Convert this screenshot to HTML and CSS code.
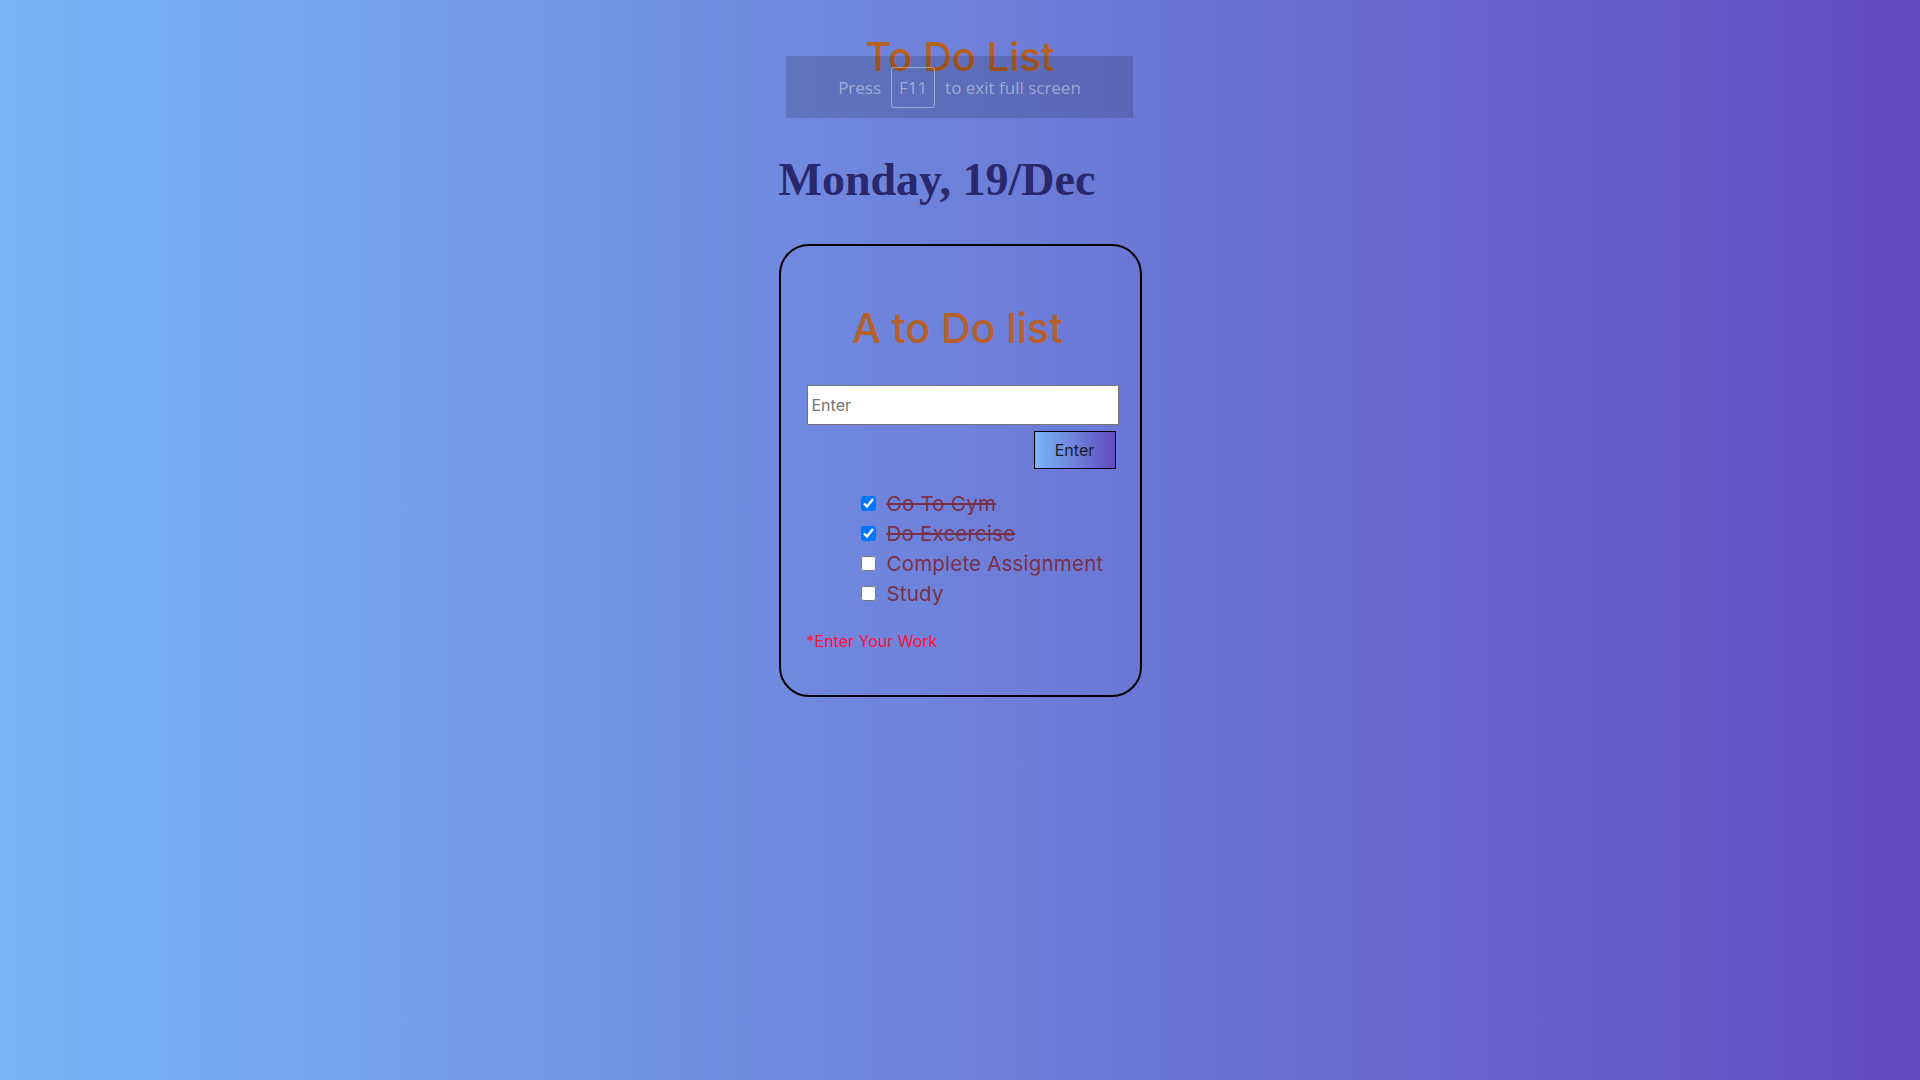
FILE: index.html
```html
<!DOCTYPE html>
<html lang="en">
<head>
<meta charset="utf-8">
<title>To Do List</title>
<link rel="stylesheet" href="styles.css">
</head>
<body>
  <h1 class="app-title">To Do List</h1>
  <main class="container">
    <h2 class="date">Monday, 19/Dec</h2>
    <section class="card">
      <h2 class="card-title">A to Do list</h2>
      <div class="form">
        <input class="task-input" type="text" placeholder="Enter">
        <button class="enter-btn" type="button">Enter</button>
      </div>
      <ul class="tasks">
        <li class="task done"><input type="checkbox" class="check" checked><span>Go To Gym</span></li>
        <li class="task done"><input type="checkbox" class="check" checked><span>Do Excercise</span></li>
        <li class="task"><input type="checkbox" class="check"><span>Complete Assignment</span></li>
        <li class="task"><input type="checkbox" class="check"><span>Study</span></li>
      </ul>
      <p class="hint">*Enter Your Work</p>
    </section>
  </main>
  <div class="fs-overlay">
    <span>Press</span><span class="key">F11</span><span>to exit full screen</span>
  </div>
</body>
</html>
```
FILE: styles.css
```css
* { box-sizing: border-box; }
html, body { margin: 0; padding: 0; }
body {
  min-height: 1080px;
  background: linear-gradient(to right, #79b6f6, #624bbf);
  font-family: "Inter", "Lato", sans-serif;
  position: relative;
}
.app-title {
  margin: 37px 0 0;
  text-align: center;
  font-size: 40px;
  line-height: 1;
  font-weight: 500;
  color: #b8621f;
}
.container {
  width: 363px;
  margin: 0 auto;
}
.date {
  margin: 80px 0 0;
  font-family: "Liberation Serif", "Times New Roman", serif;
  font-weight: 700;
  font-size: 46px;
  line-height: 1;
  color: #2a286c;
}
.card {
  margin-top: 41px;
  border: 2px solid #000;
  border-radius: 30px;
  height: 453px;
  padding: 62px 21px 0 26px;
}
.card-title {
  margin: 0 10px 0 0;
  text-align: center;
  font-size: 41px;
  line-height: 1;
  font-weight: 500;
  color: #b6612b;
}
.form {
  margin-top: 36px;
  display: flex;
  flex-direction: column;
  align-items: flex-end;
  gap: 6px;
}
.task-input {
  width: 312px;
  height: 40px;
  border: 1px solid #767676;
  background: #fff;
  padding: 0 4px;
  font-family: inherit;
  font-size: 16px;
  outline: none;
}
.task-input::placeholder { color: #757575; }
.enter-btn {
  width: 82px;
  height: 38px;
  margin-right: 3px;
  border: 1px solid #000;
  background: linear-gradient(to right, #79b6f6, #624bbf);
  font-family: inherit;
  font-size: 16px;
  color: #1d1d2a;
  padding: 0;
}
.tasks {
  list-style: none;
  margin: 19px 0 0;
  padding: 0 0 0 54px;
}
.task {
  display: flex;
  align-items: center;
  height: 30px;
  gap: 11px;
  font-size: 20.5px;
  letter-spacing: 0.2px;
  white-space: nowrap;
  color: #7a3047;
}
.check {
  width: 15px;
  height: 15px;
  margin: 0;
  flex: none;
}
.done span { text-decoration: line-through; }
.hint {
  margin: 21px 0 0;
  font-size: 16px;
  line-height: 24px;
  color: #ff1236;
}
.fs-overlay {
  position: absolute;
  left: 786px;
  top: 56px;
  width: 347px;
  height: 62px;
  background: rgba(0, 0, 0, 0.15);
  display: flex;
  align-items: center;
  justify-content: center;
  gap: 10px;
  font-family: "Open Sans", "Noto Sans", sans-serif;
  font-size: 17px;
  color: rgba(255, 255, 255, 0.42);
}
.key {
  display: inline-flex;
  align-items: center;
  justify-content: center;
  width: 44px;
  height: 41px;
  border: 1px solid rgba(255, 255, 255, 0.4);
  border-radius: 3px;
}
```
